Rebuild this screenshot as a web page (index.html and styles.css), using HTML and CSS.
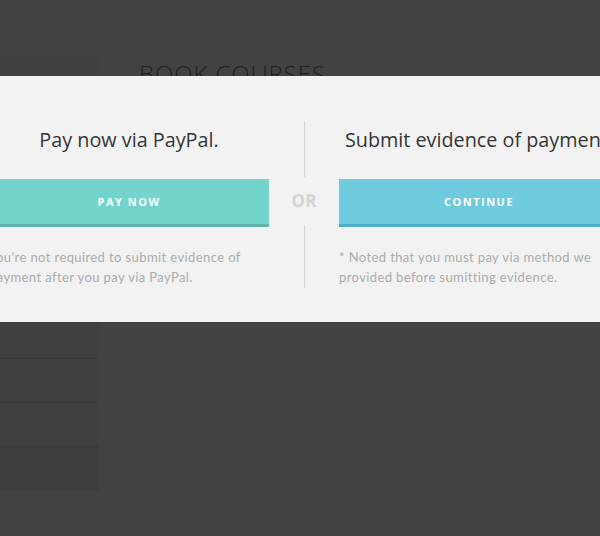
FILE: index.html
```html
<!DOCTYPE html>
<html>
<head>
<meta charset="utf-8">
<link rel="stylesheet" href="styles.css">
</head>
<body>
<div class="page">
  <aside class="sidebar">
    <div class="side-block side-top"></div>
    <div class="side-block side-row"></div>
    <div class="side-block side-row"></div>
    <div class="side-block side-dark"></div>
  </aside>
  <main class="main">
    <h1 class="page-title">BOOK COURSES</h1>
  </main>
</div>
<div class="modal">
  <div class="modal-inner">
    <section class="col">
      <h2 class="col-title">Pay now via PayPal.</h2>
      <button class="btn btn-teal">PAY NOW</button>
      <p class="note">You're not required to submit evidence of payment after you pay via PayPal.</p>
    </section>
    <div class="divider">
      <span class="line line-top"></span>
      <span class="or">OR</span>
      <span class="line line-bottom"></span>
    </div>
    <section class="col">
      <h2 class="col-title">Submit evidence of payment.</h2>
      <button class="btn btn-blue">CONTINUE</button>
      <p class="note">* Noted that you must pay via method we provided before sumitting evidence.</p>
    </section>
  </div>
</div>
</body>
</html>
```

FILE: styles.css
```css
html, body {
  margin: 0;
  padding: 0;
  background: #424242;
  height: 100%;
  overflow: hidden;
}
.page {
  display: flex;
  height: 536px;
}
.sidebar {
  width: 99px;
  margin-top: 57px;
  display: flex;
  flex-direction: column;
}
.side-block { background: #404040; }
.side-top { height: 301px; border-bottom: 1px solid #3a3a3a; }
.side-row { height: 43px; border-bottom: 1px solid #3a3a3a; }
.side-dark { height: 44px; background: #3e3e3e; }
.main {
  padding-left: 40px;
}
.page-title {
  margin: 59px 0 0;
  font-family: "Open Sans", "Liberation Sans", sans-serif;
  font-weight: 300;
  font-size: 24px;
  line-height: 30px;
  color: #1e1e1e;
  letter-spacing: 0.9px;
}
.modal {
  position: absolute;
  top: 76px;
  left: 0;
  width: 600px;
  height: 246px;
  background: #f2f2f2;
  overflow: hidden;
}
.modal-inner {
  display: flex;
  width: 630px;
  margin-left: -11px;
  padding-top: 45px;
}
.col {
  width: 280px;
  flex: none;
}
.col-title {
  margin: 0;
  text-align: center;
  white-space: nowrap;
  font-family: "Open Sans", "Liberation Sans", sans-serif;
  font-weight: 500;
  font-size: 19.8px;
  line-height: 38px;
  color: #353535;
}
.btn {
  display: block;
  width: 100%;
  height: 48px;
  margin-top: 20px;
  border: 0;
  border-bottom: 3px solid;
  padding: 0;
  font-family: "Open Sans", "Liberation Sans", sans-serif;
  font-weight: 700;
  font-size: 11px;
  letter-spacing: 1.5px;
  color: #fff;
}
.btn-teal { background: #72d4cc; border-color: #62b5ae; }
.btn-blue { background: #6ecadd; border-color: #4fb0c3; }
.note {
  margin: 20px 0 0;
  font-family: "Lato", "Liberation Sans", sans-serif;
  font-size: 13px;
  line-height: 20px;
  color: #ababab;
  letter-spacing: 0.4px;
}
.divider {
  width: 70px;
  flex: none;
  display: flex;
  flex-direction: column;
  align-items: center;
}
.line {
  width: 1px;
  background: #d6d6d6;
}
.line-top { height: 56px; }
.line-bottom { height: 63px; }
.or {
  font-family: "Open Sans", "Liberation Sans", sans-serif;
  font-weight: 700;
  font-size: 17px;
  line-height: 48px;
  color: #d3d3d3;
}
```
